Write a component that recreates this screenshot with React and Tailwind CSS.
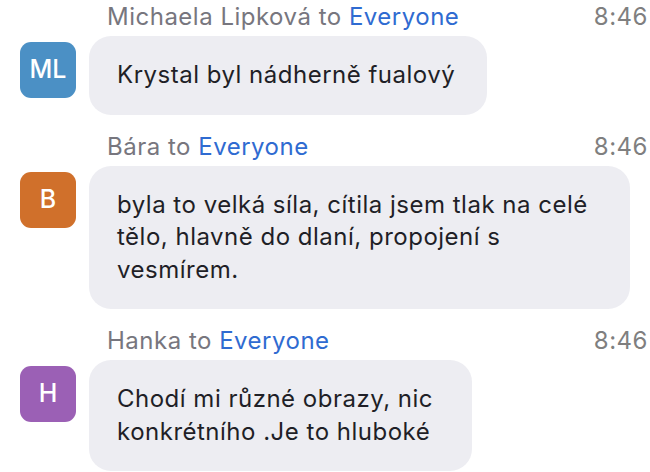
const messages = [
  {
    name: "Michaela Lipková",
    initials: "ML",
    color: "bg-[#4b90c5]",
    time: "8:46",
    width: "w-[398px]",
    text: "Krystal byl nádherně fualový",
  },
  {
    name: "Bára",
    initials: "B",
    color: "bg-[#d0702b]",
    time: "8:46",
    width: "w-[541px]",
    text: "byla to velká síla, cítila jsem tlak na celé tělo, hlavně do dlaní, propojení s vesmírem.",
  },
  {
    name: "Hanka",
    initials: "H",
    color: "bg-[#9b60b5]",
    time: "8:46",
    width: "w-[383px]",
    text: "Chodí mi různé obrazy, nic konkrétního .Je to hluboké",
  },
];

const ChatMessage = ({ name, initials, color, time, width, text }) => (
  <div className="mt-[15px] first:mt-0">
    {/* Header */}
    <div className="flex h-[36px] items-start pl-[107px] pr-[2px] text-[24px] leading-[33px] tracking-[0.5px]">
      <span className="text-[#77767e]">
        {name} to <span className="text-[#2f6bd1]">Everyone</span>
      </span>
      <span className="ml-auto text-[#7f7f7f]">{time}</span>
    </div>
    {/* Body */}
    <div className="flex items-start">
      <div
        className={`ml-[20px] mt-[6px] flex h-[56px] w-[56px] shrink-0 items-center justify-center rounded-[11px] ${color} text-[25px] font-medium text-white`}
      >
        {initials}
      </div>
      <div
        className={`ml-[13px] ${width} rounded-[22px] bg-[#ededf2] px-[28px] py-[23px] text-[24px] leading-[32.5px] tracking-[0.5px] text-[#1f1f27]`}
      >
        {text}
      </div>
    </div>
  </div>
);

export default function App() {
  return (
    <div className="h-[472px] w-[650px] overflow-hidden bg-white font-['Inter',sans-serif]">
      {messages.map((m) => (
        <ChatMessage key={m.name} {...m} />
      ))}
    </div>
  );
}
